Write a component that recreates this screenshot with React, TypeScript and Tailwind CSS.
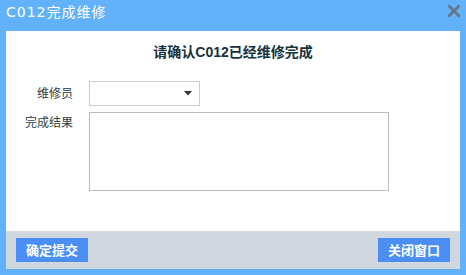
import React from "react";

const cjk = '"Liberation Sans", "Noto Sans CJK SC", sans-serif';

const App = () => {
  return (
    <div
      className="w-[466px] h-[275px] bg-[#62b1fb] flex flex-col"
      style={{ fontFamily: cjk }}
    >
      {/* title bar */}
      <div className="h-[31px] flex items-start justify-between pl-[6px] pr-[5px]">
        <span
          className="mt-[5px] text-white text-[14px] leading-[14px] tracking-[1px]"
          style={{ fontFamily: '"DejaVu Sans", "Noto Sans CJK SC", sans-serif' }}
        >
          C012完成维修
        </span>
        <svg width="14" height="14" viewBox="0 0 14 14" className="mt-[4px]">
          <path d="M1.5 1.5 L12.5 12.5 M12.5 1.5 L1.5 12.5" stroke="#6b7480" strokeWidth="2.6" />
        </svg>
      </div>

      {/* body */}
      <div className="mx-[6px] flex-1 bg-white flex flex-col">
        <div className="flex-1">
          <h2 className="mt-[11px] text-center text-[14px] leading-[20px] font-bold text-[#16323f]">
            请确认C012已经维修完成
          </h2>
          <div className="mt-[19px] grid grid-cols-[67px_auto] gap-x-[16px] gap-y-[6px] items-start">
            <label className="h-[25px] flex items-center justify-end text-[12px] text-[#2c3e46]">维修员</label>
            <div className="w-[111px] h-[25px] border border-[#cccccc] flex items-center justify-end pr-[7px]">
              <svg width="8" height="5" viewBox="0 0 8 5">
                <path d="M0 0 L8 0 L4 4.5 Z" fill="#333" />
              </svg>
            </div>
            <label className="pt-[3px] text-right text-[12px] leading-[16px] text-[#2c3e46]">完成结果</label>
            <div className="w-[300px] h-[79px] border border-[#bdbdbd]" />
          </div>
        </div>

        {/* footer */}
        <div className="h-[38px] bg-[#d0d7de] flex items-center justify-between px-[10px]">
          <button className="w-[72px] h-[24px] bg-[#4b8ff6] text-white text-[13px] font-bold leading-none">
            确定提交
          </button>
          <button className="w-[72px] h-[24px] bg-[#4b8ff6] text-white text-[13px] font-bold leading-none">
            关闭窗口
          </button>
        </div>
      </div>
      <div className="h-[6px]" />
    </div>
  );
};

export default App;
